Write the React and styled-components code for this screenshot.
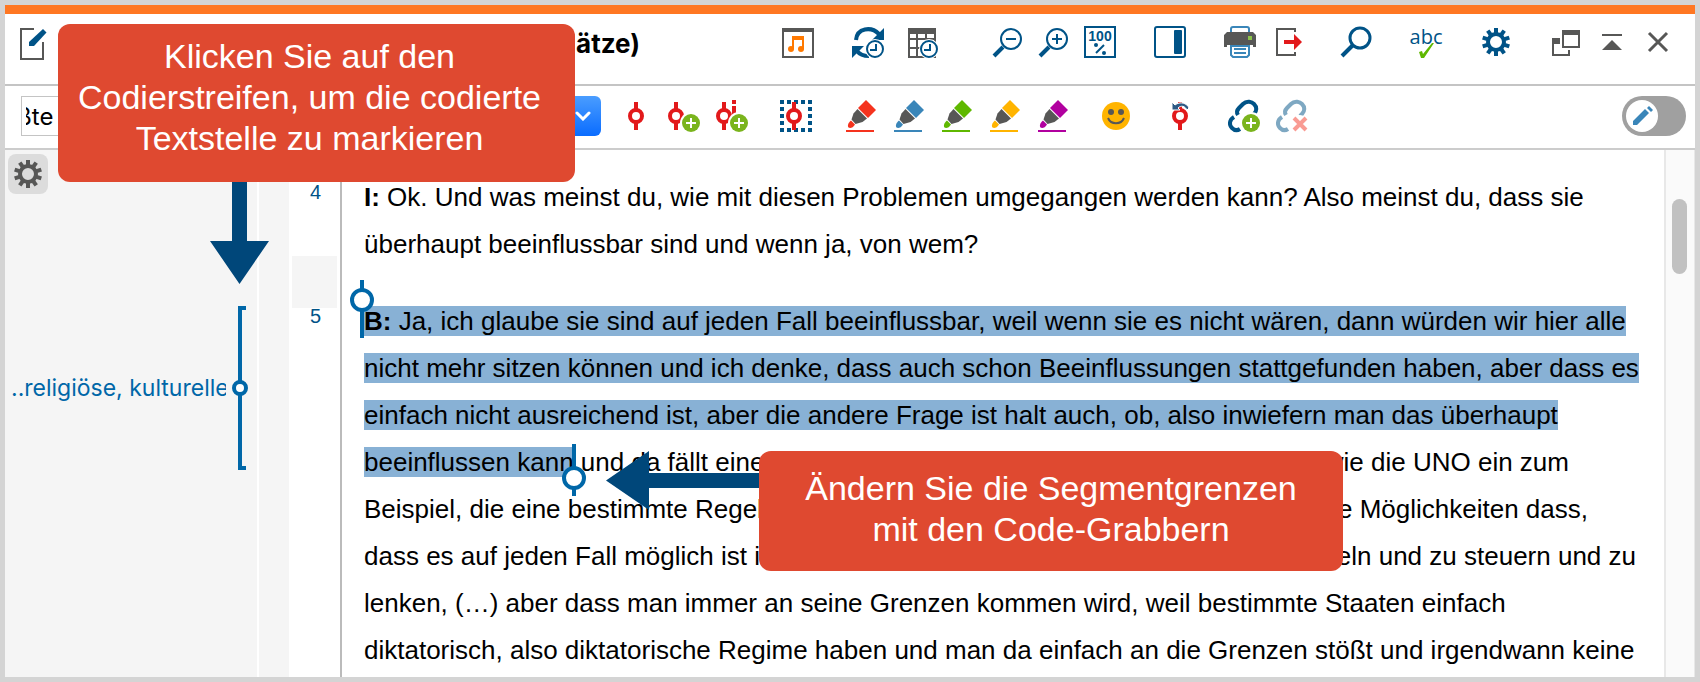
import React, { useState } from 'react'
import styled, { createGlobalStyle } from 'styled-components'

const navy = '#005387'
const gray = '#575756'
const red = '#e2191b'
const green = '#7ab41d'
const codeBlue = '#0067a8'

const markers = [
  { name: 'Rot', color: '#f5331e' },
  { name: 'Blau', color: '#3a86b9' },
  { name: 'Grün', color: '#5fb800' },
  { name: 'Gelb', color: '#ffb400' },
  { name: 'Magenta', color: '#b1009f' },
]

const Svg = ({ children }) => (
  <svg width="32" height="32" viewBox="0 0 32 32" fill="none" aria-hidden="true">
    {children}
  </svg>
)

const Gear = ({ color }) => (
  <Svg>
    <circle cx="16" cy="16" r="8" stroke={color} strokeWidth="4" />
    {[0, 36, 72, 108, 144, 180, 216, 252, 288, 324].map((a) => (
      <rect key={a} x="14" y="2" width="4" height="5" fill={color} transform={`rotate(${a} 16 16)`} />
    ))}
  </Svg>
)

const Clock = ({ x }) => (
  <>
    <circle cx={x} cy="23" r="10" fill="#fff" />
    <circle cx={x} cy="23" r="8" stroke={navy} strokeWidth="2" />
    <path d={`M${x + 1} 18v6h-6`} stroke={navy} strokeWidth="2" />
  </>
)

const Plus = () => (
  <>
    <circle cx="23" cy="23" r="11" fill="#fff" />
    <circle cx="23" cy="23" r="9" fill={green} />
    <path d="M23 18v10M18 23h10" stroke="#fff" strokeWidth="2" />
  </>
)

const Pin = ({ x }) => (
  <>
    <path d={`M${x} 2v8M${x} 22v8`} stroke={red} strokeWidth="4" />
    <circle cx={x} cy="16" r="6" stroke={red} strokeWidth="4" />
  </>
)

const Lens = ({ children }) => (
  <Svg>
    <circle cx="19" cy="13" r="10" stroke={navy} strokeWidth="2" />
    <path d="M11 21l-9 9" stroke={navy} strokeWidth="4" />
    {children}
  </Svg>
)

const Marker = ({ color }) => (
  <Svg>
    <path d="M22 0l10 10-8 8-10-10z" fill={color} />
    <path d="M13.500 9L23 18.500l-4.500 3.500-7 2-4-4.500 2-6z" fill={gray} />
    <path d="M7 20.500l4 4C9 28 6 28.500 4.500 27.500 3 25.500 4.500 22.500 7 20.500z" fill={color} />
    <path d="M2 31h28" stroke={color} strokeWidth="2" />
  </Svg>
)

const Chain = () => (
  <g stroke={navy} strokeWidth="4">
    <path d="M10 15C8 12 9 10 11 8l4-4c4-4 9-2 11 0 3 3 3 7 0 10l-2 2" />
    <path d="M6 17c-5 3-5 8-2 11 2 2 5 3 8 1" />
  </g>
)

function App() {
  const [editing, setEditing] = useState(false)
  const [code, setCode] = useState('ßte')

  return (
    <>
      <GlobalStyle />
      <Window>
        <Header>
          <IconButton aria-label="Dokument bearbeiten">
            <Svg>
              <path d="M14 3H1v30h22V16" stroke={gray} strokeWidth="2" />
              <path d="M23 3l3.500 3.500L14 20H9v-4z" fill={navy} />
            </Svg>
          </IconButton>
          <Title>ätze)</Title>

          <HeaderTools>
            <Group>
              <IconButton aria-label="Multimedia">
                <Svg>
                  <path d="M1 3h30v28H1z" stroke={gray} strokeWidth="2" />
                  <path d="M0 2h32v4H0z" fill={gray} />
                  <path d="M11 23V12h10v11" stroke="#ff7900" strokeWidth="2" />
                  <path d="M10 10h12v4H10z" fill="#ff7900" />
                  <circle cx="9" cy="23" r="3" fill="#ff7900" />
                  <circle cx="19" cy="23" r="3" fill="#ff7900" />
                </Svg>
              </IconButton>
            </Group>
            <Group $gap={24} $lead={6}>
              <IconButton aria-label="Aktualisieren">
                <Svg>
                  <path d="M4 14C5 2 19 0 27 8" stroke={navy} strokeWidth="4" />
                  <path d="M32 2v12H20z" fill={navy} />
                  <path d="M5 25c3 4 7 5 12 5" stroke={navy} strokeWidth="4" />
                  <path d="M0 20h12L0 32z" fill={navy} />
                  <Clock x={23} />
                </Svg>
              </IconButton>
              <IconButton aria-label="Zeitmarken">
                <Svg>
                  <path d="M1 4v27h26V4M9 8v23M18 8v23M1 13h26M1 22h26" stroke={gray} strokeWidth="2" />
                  <path d="M0 2h28v6H0z" fill={gray} />
                  <Clock x={21} />
                </Svg>
              </IconButton>
            </Group>
            <Group $gap={14} $lead={20}>
              <IconButton aria-label="Verkleinern">
                <Lens><path d="M14 13h10" stroke={navy} strokeWidth="2" /></Lens>
              </IconButton>
              <IconButton aria-label="Vergrößern">
                <Lens><path d="M14 13h10M19 8v10" stroke={navy} strokeWidth="2" /></Lens>
              </IconButton>
              <IconButton aria-label="Originalgröße">
                <Svg>
                  <path d="M1 1h30v30H1z" stroke={navy} strokeWidth="2" />
                  <ZoomText x="16" y="15">100</ZoomText>
                  <path d="M20 19l-8 8" stroke={navy} strokeWidth="2" />
                  <circle cx="12" cy="19" r="2" fill={navy} />
                  <circle cx="20" cy="27" r="2" fill={navy} />
                </Svg>
              </IconButton>
            </Group>
            <Group $lead={6}>
              <IconButton aria-label="Seitenleiste">
                <Svg>
                  <rect x="1" y="1" width="30" height="30" rx="2" stroke={navy} strokeWidth="2" />
                  <rect x="20" y="4" width="8" height="24" rx="1" fill={navy} />
                </Svg>
              </IconButton>
            </Group>
            <Group $gap={20} $lead={6}>
              <IconButton aria-label="Drucken">
                <Svg>
                  <rect x="7" y="1" width="18" height="12" rx="2" stroke="#3a86b9" strokeWidth="2" />
                  <path d="M3 6h26l3 3v12h-3v-2H3v2H0V9z" fill={gray} />
                  <path d="M24 10h4v4h-4z" fill="#8bc34a" />
                  <path d="M7 20h18v9l-2 2H9l-2-2z" fill="#fff" stroke="#3a86b9" strokeWidth="2" />
                  <path d="M10 23h12M10 27h12" stroke="#3a86b9" strokeWidth="2" />
                </Svg>
              </IconButton>
              <IconButton aria-label="Exportieren">
                <Svg>
                  <path d="M19 6V3H1v26h18v-3" stroke={gray} strokeWidth="2" />
                  <path d="M8 14h10V8l8 8-8 8v-6H8z" fill={red} />
                </Svg>
              </IconButton>
            </Group>
            <Group>
              <IconButton aria-label="Suchen">
                <Svg>
                  <circle cx="20" cy="12" r="10" stroke={navy} strokeWidth="3" />
                  <path d="M13 19L2 30" stroke={navy} strokeWidth="4" />
                </Svg>
              </IconButton>
            </Group>
            <Group $lead={6}>
              <IconButton aria-label="Rechtschreibung">
                <Svg>
                  <SpellText x="16" y="18">abc</SpellText>
                  <path d="M9 26l3-1 1 3 9-11h2L14 32h-3z" fill="#5fb800" />
                </Svg>
              </IconButton>
            </Group>
            <Group $lead={6}>
              <IconButton aria-label="Einstellungen"><Gear color={navy} /></IconButton>
            </Group>
            <Group $gap={14} $lead={6}>
              <IconButton aria-label="Abdocken">
                <Svg>
                  <path d="M13 5h16v16H13z" stroke={gray} strokeWidth="2" />
                  <path d="M12 4h18v5H12zM2 12h8v6H2z" fill={gray} />
                  <path d="M3 16v13h16v-5" stroke={gray} strokeWidth="2" />
                </Svg>
              </IconButton>
              <IconButton aria-label="Maximieren">
                <Svg>
                  <path d="M6 9h20" stroke={gray} strokeWidth="2" />
                  <path d="M16 14l10 10H6z" fill={gray} />
                </Svg>
              </IconButton>
              <IconButton aria-label="Schließen">
                <Svg><path d="M7 7l18 18M25 7L7 25" stroke={gray} strokeWidth="3" /></Svg>
              </IconButton>
            </Group>
          </HeaderTools>
        </Header>

        <Toolbar>
          <Combo>
            <ComboInput aria-label="Code" value={code} onChange={(e) => setCode(e.target.value)} />
            <ComboButton aria-label="Codes anzeigen">
              <svg width="16" height="10" viewBox="0 0 16 10" fill="none" aria-hidden="true">
                <path d="M2 2l6 6 6-6" stroke="#fff" strokeWidth="3" strokeLinecap="round" />
              </svg>
            </ComboButton>
          </Combo>
          <Group $gap={16}>
            <IconButton aria-label="Codieren"><Svg><Pin x={16} /></Svg></IconButton>
            <IconButton aria-label="Mit neuem Code codieren"><Svg><Pin x={8} /><Plus /></Svg></IconButton>
            <IconButton aria-label="In-vivo codieren">
              <Svg>
                <Pin x={8} />
                <path d="M18 0v4M18 6v14" stroke={red} strokeWidth="4" />
                <Plus />
              </Svg>
            </IconButton>
          </Group>
          <Group>
            <IconButton aria-label="Codierung hervorheben">
              <Svg>
                <rect x="2" y="2" width="28" height="28" stroke={navy} strokeWidth="4" strokeDasharray="4 3" strokeDashoffset="2" />
                <Pin x={14} />
              </Svg>
            </IconButton>
          </Group>
          <Group $gap={16}>
            {markers.map((m) => (
              <IconButton key={m.name} aria-label={m.name}><Marker color={m.color} /></IconButton>
            ))}
          </Group>
          <Group>
            <IconButton aria-label="Emoticode">
              <Svg>
                <circle cx="16" cy="16" r="14" fill="#ffb400" />
                <circle cx="11" cy="12" r="3" fill={gray} />
                <circle cx="21" cy="12" r="3" fill={gray} />
                <path d="M8 18c3 7 13 7 16 0" stroke={gray} strokeWidth="2" />
              </Svg>
            </IconButton>
          </Group>
          <Group>
            <IconButton aria-label="Codierung rückgängig">
              <Svg>
                <Pin x={16} />
                <path d="M8 2l3 3c5-4 12-2 14 3l-2 2c-2-4-6-5-9-2l2 2H8z" fill="#2c5984" stroke="#fff" strokeWidth="1" />
              </Svg>
            </IconButton>
          </Group>
          <Group $gap={16}>
            <IconButton aria-label="Link einfügen"><Svg><Chain /><Plus /></Svg></IconButton>
            <IconButton aria-label="Link entfernen" disabled>
              <Svg>
                <g opacity="0.500"><Chain /></g>
                <circle cx="24" cy="24" r="9" fill="#fff" />
                <path d="M18 18l12 12M30 18L18 30" stroke="#f99b93" strokeWidth="4" />
              </Svg>
            </IconButton>
          </Group>
          <Toggle>
            <input type="checkbox" aria-label="Bearbeitungsmodus" checked={editing} onChange={() => setEditing(!editing)} />
            <Knob>
              <Svg>
                <path d="M7 21L19 9l4 4-12 12H7zM21 8l2-2 4 4-2 2z" fill="#3a86b9" />
              </Svg>
            </Knob>
          </Toggle>
        </Toolbar>

        <Body>
          <CodePanel>
            <PanelButton aria-label="Anzeigeoptionen"><Gear color={gray} /></PanelButton>
            <Coding>
              <CodeName>..religiöse, kulturelle</CodeName>
              <Stripe />
            </Coding>
          </CodePanel>
          <MemoColumn />
          <Document>
            <Paragraph>
              <Number>4</Number>
              <Text>
                <Line><b>I:</b> Ok. Und was meinst du, wie mit diesen Problemen umgegangen werden kann? Also meinst du, dass sie</Line>
                <Line>überhaupt beeinflussbar sind und wenn ja, von wem?</Line>
              </Text>
            </Paragraph>
            <Gap><span /></Gap>
            <Paragraph>
              <Number>5</Number>
              <Text>
                <Line>
                  <Marked>
                    <Grabber $start />
                    <b>B:</b> Ja, ich glaube sie sind auf jeden Fall beeinflussbar, weil wenn sie es nicht wären, dann würden wir hier alle
                  </Marked>
                </Line>
                <Line><Marked>nicht mehr sitzen können und ich denke, dass auch schon Beeinflussungen stattgefunden haben, aber dass es</Marked></Line>
                <Line><Marked>einfach nicht ausreichend ist, aber die andere Frage ist halt auch, ob, also inwiefern man das überhaupt</Marked></Line>
                <SplitLine $width={1205}>
                  <span><Marked>beeinflussen kann<Grabber /></Marked> und da fällt eine</span>
                  <span>wie die UNO ein zum</span>
                </SplitLine>
                <SplitLine $width={1224}>
                  <span>Beispiel, die eine bestimmte Regel</span>
                  <span>e Möglichkeiten dass,</span>
                </SplitLine>
                <SplitLine $width={1272}>
                  <span>dass es auf jeden Fall möglich ist i</span>
                  <span>eln und zu steuern und zu</span>
                </SplitLine>
                <Line>lenken, (…) aber dass man immer an seine Grenzen kommen wird, weil bestimmte Staaten einfach</Line>
                <Line>diktatorisch, also diktatorische Regime haben und man da einfach an die Grenzen stößt und irgendwann keine</Line>
              </Text>
            </Paragraph>
          </Document>
          <Scrollbar><Thumb /></Scrollbar>
        </Body>

        <StripeHint>
          Klicken Sie auf den<br />Codierstreifen, um die codierte<br />Textstelle zu markieren
          <DownArrow width="59" height="102" viewBox="0 0 59 102" aria-hidden="true">
            <path d="M22 0h15v59h22L29.500 102 0 59h22z" fill="#00477a" />
          </DownArrow>
        </StripeHint>
        <GrabberHint>
          Ändern Sie die Segmentgrenzen<br />mit den Code-Grabbern
          <LeftArrow width="153" height="60" viewBox="0 0 153 60" aria-hidden="true">
            <path d="M153 22v15H43v22L0 29.500 43 0v22z" fill="#00477a" />
          </LeftArrow>
        </GrabberHint>
      </Window>
    </>
  )
}

export default App

const GlobalStyle = createGlobalStyle`
  *, *::before, *::after {
    box-sizing: border-box;
  }
  body {
    margin: 0;
    font-family: "Liberation Sans", Arial, sans-serif;
  }
`

const Window = styled.main`
  position: relative;
  display: flex;
  flex-direction: column;
  height: 100vh;
  overflow: hidden;
  border: 5px solid #d4d4d4;
  background-color: #ffffff;
`

const Header = styled.header`
  display: flex;
  align-items: flex-start;
  flex: none;
  height: 81px;
  padding: 12px 21px 0 15px;
  border-top: 9px solid #ff7722;
  border-bottom: 2px solid #c4c4c4;
`

const Title = styled.h1`
  width: 588px;
  margin: 0;
  text-align: right;
  white-space: nowrap;
  font: bold 26px/36px Inter, sans-serif;
`

const HeaderTools = styled.div`
  display: flex;
  gap: 32px;
  margin-left: auto;
`

const Group = styled.div`
  display: flex;
  gap: ${(p) => p.$gap || 0}px;
  margin-left: ${(p) => p.$lead || 0}px;
`

const IconButton = styled.button`
  width: 32px;
  height: 32px;
  padding: 0;
  border: 0;
  background: none;

  svg {
    display: block;
    overflow: visible;
  }
`

const ZoomText = styled.text`
  fill: ${navy};
  font: bold 14px "Liberation Sans", sans-serif;
  text-anchor: middle;
`

const SpellText = styled.text`
  fill: ${navy};
  font: 20px "Open Sans", sans-serif;
  text-anchor: middle;
`

const Toolbar = styled.div`
  display: flex;
  align-items: center;
  gap: 32px;
  flex: none;
  height: 64px;
  padding: 0 9px 2px 16px;
  border-bottom: 2px solid #cccccc;
`

const Combo = styled.div`
  display: flex;
  width: 580px;
  height: 40px;
  margin-right: -13px;
`

const ComboInput = styled.input`
  flex: 1;
  min-width: 0;
  padding: 0 4px;
  border: 1px solid #c4c4c4;
  border-right: 0;
  text-indent: -9px;
  font: 24px Inter, sans-serif;
`

const ComboButton = styled.button`
  display: flex;
  align-items: center;
  justify-content: center;
  width: 36px;
  padding: 0;
  border: 0;
  border-radius: 0 6px 6px 0;
  background: linear-gradient(#4a9dff, #0a6cff);
`

const Toggle = styled.label`
  display: flex;
  width: 64px;
  height: 40px;
  margin-left: auto;
  padding: 4px;
  border-radius: 20px;
  background-color: #a0a0a0;

  input {
    position: absolute;
    opacity: 0;
  }
  input:checked + span {
    margin-left: auto;
  }
`

const Knob = styled.span`
  width: 32px;
  height: 32px;
  border-radius: 50%;
  background-color: #ffffff;
`

const Body = styled.div`
  display: flex;
  flex: 1;
  min-height: 0;
`

const CodePanel = styled.aside`
  flex: none;
  width: 252px;
  padding: 4px 0 0 3px;
  background-color: #f5f5f5;
`

const PanelButton = styled.button`
  display: block;
  width: 40px;
  height: 40px;
  padding: 4px;
  border: 0;
  border-radius: 8px;
  background-color: #dcdcdc;

  svg {
    display: block;
  }
`

const Coding = styled.div`
  display: flex;
  align-items: center;
  height: 164px;
  margin-top: 112px;
  padding-left: 3px;
`

const CodeName = styled.span`
  width: 215px;
  margin-right: 12px;
  overflow: hidden;
  white-space: nowrap;
  color: ${codeBlue};
  font: 23px/32px Inter, sans-serif;
`

const Stripe = styled.span`
  position: relative;
  width: 8px;
  height: 164px;
  border: 4px solid ${codeBlue};
  border-right: 0;

  &::after {
    content: '';
    position: absolute;
    top: 70px;
    left: -10px;
    width: 16px;
    height: 16px;
    border: 4px solid ${codeBlue};
    border-radius: 50%;
    background-color: #ffffff;
  }
`

const MemoColumn = styled.div`
  flex: none;
  width: 35px;
  border: solid #ffffff;
  border-width: 0 3px 0 2px;
  background-color: #f5f5f5;
`

const Document = styled.article`
  flex: 1;
  min-width: 0;
  overflow: hidden;
  padding-top: 24px;
  background: linear-gradient(#bbbbbb, #bbbbbb) 48px 0 / 2px 100% no-repeat;
`

const Paragraph = styled.section`
  display: flex;
`

const Number = styled.span`
  flex: none;
  width: 48px;
  padding-left: 18px;
  color: ${navy};
  font-size: 20px;
  line-height: 36px;
`

const Text = styled.p`
  margin: 0 0 0 24px;
  font-size: 26px;
  line-height: 47px;
`

const Line = styled.span`
  display: block;
  white-space: nowrap;
`

const SplitLine = styled(Line)`
  display: flex;
  justify-content: space-between;
  width: ${(p) => p.$width}px;
`

const Marked = styled.mark`
  position: relative;
  background-color: #88b1d5;
  color: #000000;
`

const Grabber = styled.i`
  position: absolute;
  ${(p) => (p.$start ? 'left: -4px; top: -26px; height: 58px;' : 'right: -2px; top: -3px; height: 52px;')}
  width: 4px;
  background-color: ${codeBlue};

  &::after {
    content: '';
    position: absolute;
    left: -10px;
    ${(p) => (p.$start ? 'top: 8px;' : 'bottom: 6px;')}
    width: 24px;
    height: 24px;
    border: 4px solid ${codeBlue};
    border-radius: 50%;
    background-color: #ffffff;
  }
`

const Gap = styled.div`
  display: flex;
  height: 30px;

  span {
    flex: none;
    width: 45px;
    height: 52px;
    margin-top: -12px;
    background-color: #f5f5f5;
  }
`

const Scrollbar = styled.div`
  flex: none;
  width: 31px;
  padding: 49px 7px 0 6px;
  border: solid #e8e8e8;
  border-width: 0 1px 0 2px;
  background-color: #fafafa;
`

const Thumb = styled.div`
  height: 75px;
  border-radius: 8px;
  background-color: #c1c1c1;
`

const Callout = styled.div`
  position: absolute;
  border-radius: 12px;
  background-color: #df4930;
  color: #ffffff;
  font-size: 34px;
  line-height: 41px;
  text-align: center;
`

const StripeHint = styled(Callout)`
  left: 53px;
  top: 19px;
  width: 517px;
  height: 158px;
  padding: 12px 14px 0 0;
`

const GrabberHint = styled(Callout)`
  left: 754px;
  top: 446px;
  width: 584px;
  height: 120px;
  padding-top: 17px;
`

const DownArrow = styled.svg`
  position: absolute;
  left: 152px;
  top: 158px;
`

const LeftArrow = styled.svg`
  position: absolute;
  right: 584px;
  top: 0;
`
